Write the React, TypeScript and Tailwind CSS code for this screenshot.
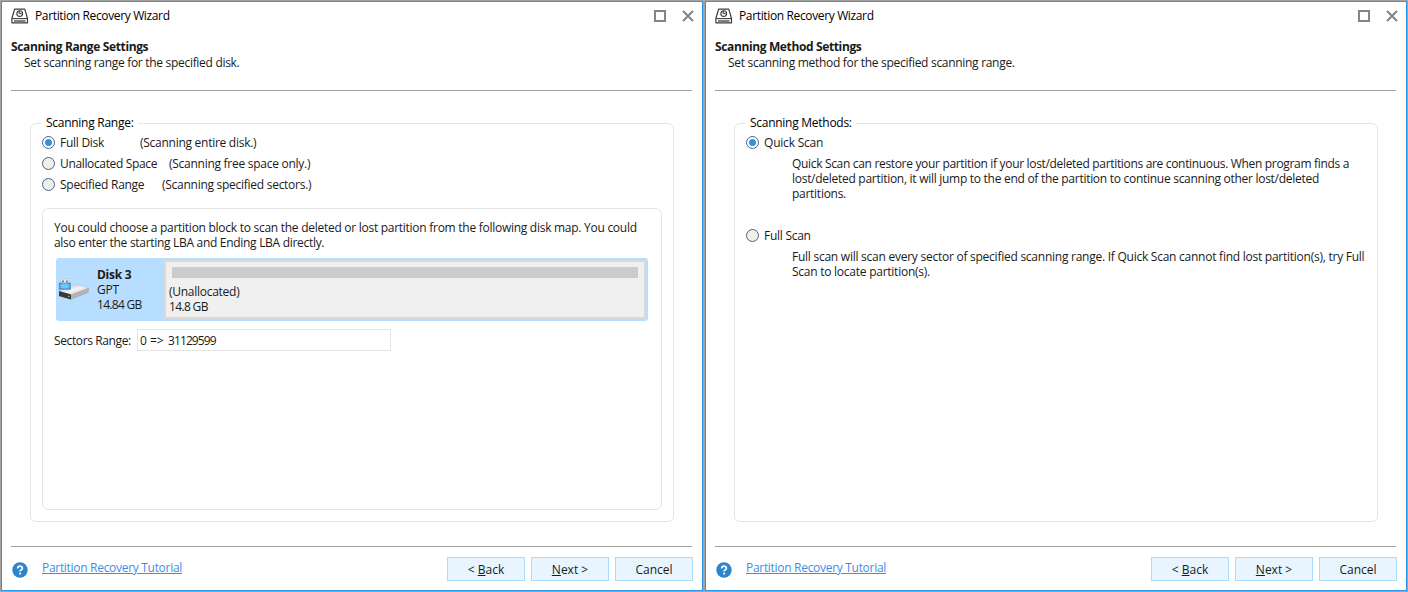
import type { ReactNode } from "react";

interface WizardWindowProps {
  heading: string;
  description: string;
  legend: string;
  children: ReactNode;
}

interface RadioOptionProps {
  label: string;
  hint?: string;
  labelClass?: string;
  checked?: boolean;
}

function DiskIcon() {
  return (
    <svg width="18" height="17" viewBox="0 0 18 17" fill="none" stroke="#3c3c3c">
      <path d="M3.6 1.2h10.2l2.7 9.3v4.3H.9v-4.3z" strokeWidth="1.2" strokeLinejoin="round" />
      <path d="M1 10.6h15.5" strokeWidth="1.1" />
      <path d="M3 13h11.5" strokeWidth="1.3" />
      <circle cx="8.7" cy="5.6" r="2.9" strokeWidth="1.1" />
      <path d="M8.7 2.8v2.9h2.9M8.600 5.700 7 4.600" strokeWidth=".9" />
    </svg>
  );
}

function UsbDriveIcon() {
  return (
    <svg width="32" height="24" viewBox="0 0 32 24">
      <defs>
        <linearGradient id="driveTop" x1="0" y1="0" x2="1" y2="1">
          <stop offset="0" stopColor="#b9b9bc" />
          <stop offset="0.5" stopColor="#f1f1f3" />
          <stop offset="1" stopColor="#d6d6d9" />
        </linearGradient>
      </defs>
      <path d="M1 13 17 6.500l13.500 3.500v4.500L13 21.500 1 18z" fill="#9a9a9d" />
      <path d="M1 13 17 6.500l13.500 3.500L13 16.500z" fill="url(#driveTop)" />
      <path d="M1 13l12 3.500v5L1 18z" fill="#38383a" />
      <path d="M13 16.500 30.500 10v4L13 21.500z" fill="#b3b3b6" />
      <circle cx="10.8" cy="18.5" r=".8" fill="#6fd46a" />
      <path d="M2.500 1h9v5h-9z" fill="#ececec" stroke="#b1b1b1" strokeWidth=".5" />
      <path d="M4 2.400h2v1.600H4zM8 2.400h2v1.600H8z" fill="#777" />
      <path d="M.8 4.500h12v7.300H.8z" fill="#4a95e6" />
      <ellipse cx="6.8" cy="8.1" rx="4.4" ry="2.5" fill="#66cdf0" />
    </svg>
  );
}

function HelpIcon() {
  return (
    <svg width="16" height="16" viewBox="0 0 16 16">
      <circle cx="8" cy="8" r="7.7" fill="#2f83c9" />
      <path
        d="M5.7 6.5c0-3.1 4.7-3.1 4.7-.3 0 1.6-2.3 1.5-2.3 3.3"
        fill="none"
        stroke="#fff"
        strokeWidth="1.7"
      />
      <path d="M7.2 10.7h1.8v1.7H7.2z" fill="#fff" />
    </svg>
  );
}

function RadioOption({ label, hint, labelClass = "", checked = false }: RadioOptionProps) {
  return (
    <div className="flex h-[21px] items-center whitespace-nowrap">
      <span
        className={`mr-[5px] flex size-[13px] shrink-0 items-center justify-center rounded-full border border-[#4a6391] ${
          checked ? "bg-white" : "bg-[#f0f0eb]"
        }`}
      >
        {checked && <span className="size-[7px] rounded-full bg-[#3393d6]" />}
      </span>
      <span className={labelClass}>{label}</span>
      {hint && <span>{hint}</span>}
    </div>
  );
}

function WizardButton({ children }: { children: ReactNode }) {
  return (
    <button className="h-[24px] w-[78px] border border-[#a9dcfa] bg-[#e8f5fe] pt-[2px] leading-[20px] tracking-normal text-[#1a1a1a]">
      {children}
    </button>
  );
}

function WizardWindow({ heading, description, legend, children }: WizardWindowProps) {
  return (
    <section className="flex h-[590px] w-[702px] flex-col border border-[#2f93e4] bg-white">
      <header className="flex h-[28px] shrink-0 items-center pr-[8px] pl-[9px]">
        <DiskIcon />
        <h1 className="ml-[6px] tracking-[-0.36px] text-black">Partition Recovery Wizard</h1>
        <div className="ml-auto flex items-center gap-[16px]">
          <span className="size-[12px] border-2 border-[#838383]" />
          <svg width="12" height="12" viewBox="0 0 12 12" stroke="#838383" strokeWidth="2">
            <path d="m1 1 10 10M11 1 1 11" />
          </svg>
        </div>
      </header>

      <div className="mr-[10px] ml-[9px] h-[61px] shrink-0 border-b border-[#9f9f9f] pt-[9px] leading-[16px]">
        <h2 className="font-bold tracking-[-0.37px]">{heading}</h2>
        <p className="pl-[13px] tracking-[-0.3px]">{description}</p>
      </div>

      <div className="mx-[28px] mt-[32px] h-[399px] w-[644px] shrink-0 rounded-md border border-[#e5e5e5] px-[11px]">
        <div className="-mt-[9px] mb-[1px] flex h-[16px] items-center">
          <span className="bg-white px-[4px] whitespace-nowrap text-black">{legend}</span>
        </div>
        {children}
      </div>

      <footer className="mr-[10px] ml-[9px] mt-[24px] flex h-[35px] shrink-0 items-start border-t border-[#9f9f9f] pt-[10px]">
        <span className="mt-[5px] ml-[1px]">
          <HelpIcon />
        </span>
        <a className="mt-[3px] ml-[14px] leading-[16px] tracking-[-0.3px] text-[#3f8be8] underline">
          Partition Recovery Tutorial
        </a>
        <div className="-mr-[1px] ml-auto flex gap-[6px]">
          <WizardButton>
            &lt; <u>B</u>ack
          </WizardButton>
          <WizardButton>
            <u>N</u>ext &gt;
          </WizardButton>
          <WizardButton>Cancel</WizardButton>
        </div>
      </footer>
    </section>
  );
}

function DiskMap() {
  return (
    <div className="mt-[8px] ml-[2px] flex h-[63px] w-[592px] rounded-[3px] bg-[#b8deff] py-[2px] pr-[2px]">
      <div className="flex w-[108px] shrink-0 pt-[7px] leading-[15px]">
        <span className="mt-[11px] ml-[2px] w-[39px]">
          <UsbDriveIcon />
        </span>
        <div className="whitespace-nowrap">
          <p className="font-bold">Disk 3</p>
          <p>GPT</p>
          <p className="tracking-[-0.7px]">14.84 GB</p>
        </div>
      </div>
      <div className="flex-1 border-2 border-[#d9d9d9] bg-[#f0f0f0] pt-[5px] leading-[15px]">
        <div className="mr-[6px] mb-[6px] ml-[6px] h-[11px] bg-[#cbcbcb]" />
        <p className="pl-[3px]">(Unallocated)</p>
        <p className="pl-[3px] tracking-[-0.65px]">14.8 GB</p>
      </div>
    </div>
  );
}

export default function App() {
  return (
    <main className="flex h-[592px] w-[1408px] gap-[2px] overflow-hidden bg-[#a3a3a3] p-px font-['Open_Sans','Noto_Sans',sans-serif] text-[12px] tracking-[-0.27px] text-[#1a1a1a]">
      <WizardWindow
        heading="Scanning Range Settings"
        description="Set scanning range for the specified disk."
        legend="Scanning Range:"
      >
        <RadioOption label="Full Disk" labelClass="w-[80px]" hint="(Scanning entire disk.)" checked />
        <RadioOption
          label="Unallocated Space"
          labelClass="w-[109px] tracking-[-0.35px]"
          hint="(Scanning free space only.)"
        />
        <RadioOption label="Specified Range" labelClass="w-[102px]" hint="(Scanning specified sectors.)" />
        <div className="mt-[13px] h-[302px] w-[620px] rounded-md border border-[#e5e5e5] pt-[11px] pl-[11px]">
          <p className="leading-[15px] whitespace-nowrap">
            You could choose a partition block to scan the deleted or lost partition from the following disk map. You could
            <br />
            <span className="tracking-[-0.3px]">also enter the starting LBA and Ending LBA directly.</span>
          </p>
          <DiskMap />
          <div className="mt-[8px] flex items-center whitespace-nowrap">
            <label className="w-[83px] pt-[2px] tracking-[-0.38px]">Sectors Range:</label>
            <span className="flex h-[22px] w-[254px] items-center border border-[#e5e5e5] pt-[2px] pl-[2px]">
              <span className="w-[28px] tracking-normal">0 =&gt;</span>
              <span className="tracking-[-0.9px]">31129599</span>
            </span>
          </div>
        </div>
      </WizardWindow>

      <WizardWindow
        heading="Scanning Method Settings"
        description="Set scanning method for the specified scanning range."
        legend="Scanning Methods:"
      >
        <RadioOption label="Quick Scan" labelClass="tracking-[-0.2px]" checked />
        <p className="mt-[3px] ml-[46px] leading-[15px] whitespace-nowrap">
          <span className="tracking-[-0.325px]">
            Quick Scan can restore your partition if your lost/deleted partitions are continuous. When program finds a
          </span>
          <br />
          <span className="tracking-[-0.28px]">
            lost/deleted partition, it will jump to the end of the partition to continue scanning other lost/deleted
          </span>
          <br />
          partitions.
        </p>
        <div className="mt-[24px]">
          <RadioOption label="Full Scan" />
        </div>
        <p className="mt-[3px] ml-[46px] leading-[15px] tracking-[-0.25px] whitespace-nowrap">
          Full scan will scan every sector of specified scanning range. If Quick Scan cannot find lost partition(s), try Full
          <br />
          Scan to locate partition(s).
        </p>
      </WizardWindow>
    </main>
  );
}
